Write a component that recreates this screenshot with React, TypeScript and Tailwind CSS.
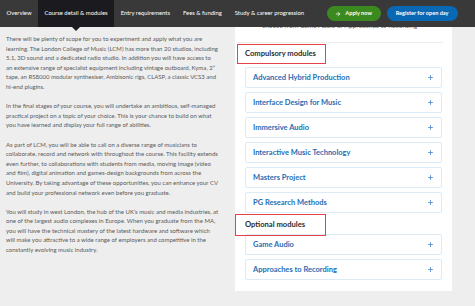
import { Plus, ArrowRight } from "lucide-react"

const tabs = ["Overview", "Course detail & modules", "Entry requirements", "Fees & funding", "Study & career progression"]

const compulsory = [
  "Advanced Hybrid Production",
  "Interface Design for Music",
  "Immersive Audio",
  "Interactive Music Technology",
  "Masters Project",
  "PG Research Methods",
]

const optional = ["Game Audio", "Approaches to Recording"]

const Module = ({ title }: { title: string }) => (
  <div className="h-[21px] flex items-center justify-between pl-[7px] pr-[7px] border border-[#dcebf6] rounded-[2px] bg-white">
    <span className="text-[7.5px] font-bold text-[#1f6db3]">{title}</span>
    <Plus size={7} strokeWidth={2.5} className="text-[#3a7cc2]" />
  </div>
)

const App = () => {
  return (
    <div className="w-[475px] h-[306px] overflow-hidden bg-[#eeeeee] font-['Lato',sans-serif]">
      <nav className="relative z-10 h-[27px] bg-[#393939] flex items-stretch">
        {tabs.map((t, i) => (
          <div
            key={t}
            className={`relative flex items-center px-[6.5px] text-[5.9px] text-white whitespace-nowrap ${i === 1 ? "bg-[#1b1b1f]" : ""}`}
          >
            {t}
            {i === 1 && (
              <span className="absolute left-1/2 -translate-x-1/2 top-full w-0 h-0 border-l-[4px] border-r-[4px] border-t-[4px] border-l-transparent border-r-transparent border-t-[#1b1b1f]" />
            )}
          </div>
        ))}
        <div className="flex items-center gap-[6px] ml-[16px]">
          <button className="h-[15px] w-[54px] rounded-full bg-[#3b8a1f] text-white text-[5.6px] font-bold flex items-center justify-center gap-[4px]">
            <ArrowRight size={6} strokeWidth={3} />
            Apply now
          </button>
          <button className="h-[15px] w-[71px] rounded-full bg-[#0868b4] text-white text-[5.6px] font-bold flex items-center justify-center whitespace-nowrap">
            Register for open day
          </button>
        </div>
      </nav>

      <div className="flex">
        <div className="w-[235px] shrink-0 pl-[6px] pt-[7px] text-[6px] leading-[9.6px] text-[#5a5a5a] whitespace-nowrap flex flex-col gap-[9.6px]">
          <p>
            There will be plenty of scope for you to experiment and apply what you are<br />
            learning. The London College of Music (LCM) has more than 20 studios, including<br />
            5.1, 3D sound and a dedicated radio studio. In addition you will have access to<br />
            an extensive range of specialist equipment including vintage outboard, Kyma, 2”<br />
            tape, an RS8000 modular synthesiser, Ambisonic rigs, CLASP, a classic VCS3 and<br />
            hi-end plugins.
          </p>
          <p>
            In the final stages of your course, you will undertake an ambitious, self-managed<br />
            practical project on a topic of your choice. This is your chance to build on what<br />
            you have learned and display your full range of abilities.
          </p>
          <p>
            As part of LCM, you will be able to call on a diverse range of musicians to<br />
            collaborate, record and network with throughout the course. This facility extends<br />
            even further, to collaborations with students from media, moving image (video<br />
            and film), digital animation and games-design backgrounds from across the<br />
            University. By taking advantage of these opportunities, you can enhance your CV<br />
            and build your professional network even before you graduate.
          </p>
          <p>
            You will study in west London, the hub of the UK’s music and media industries, at<br />
            one of the largest audio complexes in Europe. When you graduate from the MA,<br />
            you will have the technical mastery of the latest hardware and software which<br />
            will make you attractive to a wide range of employers and competitive in the<br />
            constantly evolving music industry.
          </p>
        </div>

        <div className="w-[217px] shrink-0 h-[264px] bg-white overflow-hidden">
          <p className="-mt-[6px] pl-[27px] text-[6.6px] leading-[9px] text-[#666] whitespace-nowrap">
            choose from Game Audio or Approaches to Recording
          </p>
          <div className="mt-[12px] ml-[2px] mr-[9px] h-px bg-[#ececec]" />
          <div className="mt-[1px] ml-[2px] w-[89px] h-[20px] border-[1.5px] border-[#e5414a] flex items-center pl-[7px] text-[7.6px] font-bold text-[#2b2b2b]">
            Compulsory modules
          </div>
          <div className="mt-[3px] ml-[10px] mr-[10px] flex flex-col gap-[4px]">
            {compulsory.map((m) => (
              <Module key={m} title={m} />
            ))}
          </div>
          <div className="relative z-10 mt-[1px] w-[91px] h-[22px] border-[1.5px] border-[#e5414a] flex items-center pl-[9px] text-[7.6px] font-bold text-[#2b2b2b]">
            Optional modules
          </div>
          <div className="-mt-[2px] ml-[10px] mr-[10px] flex flex-col gap-[4px]">
            {optional.map((m) => (
              <Module key={m} title={m} />
            ))}
          </div>
        </div>
      </div>
    </div>
  )
}

export default App
